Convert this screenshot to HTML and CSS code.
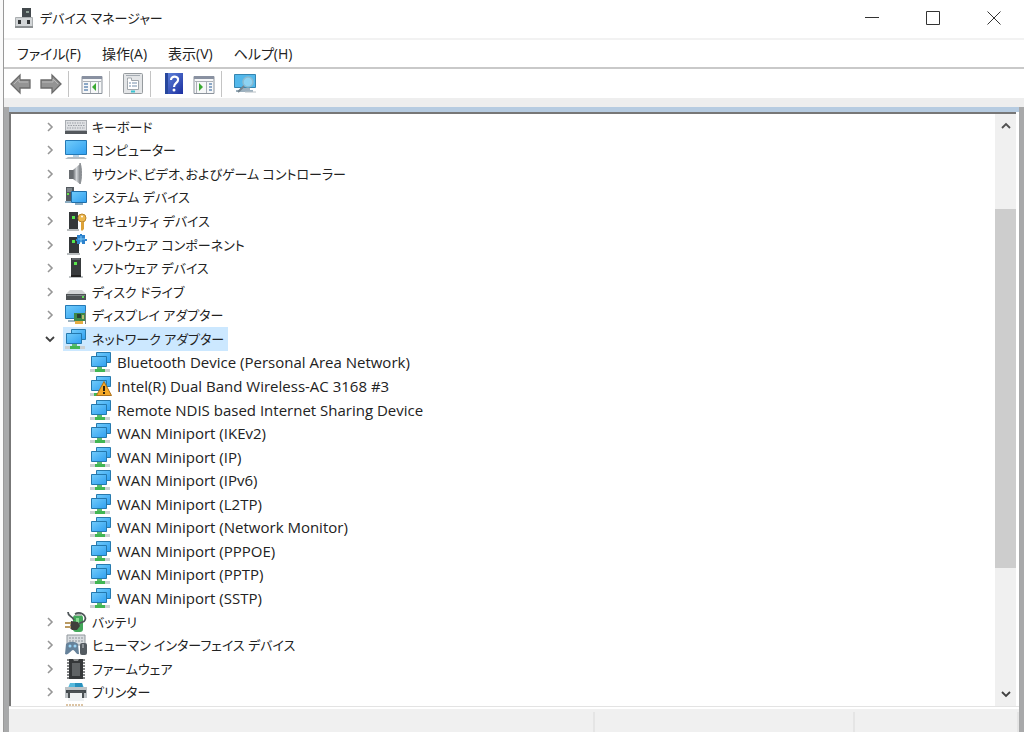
FILE: index.html
```html
<!DOCTYPE html>
<html lang="ja">
<head>
<meta charset="utf-8">
<title>デバイス マネージャー</title>
<link rel="stylesheet" href="styles.css">
</head>
<body>
<svg class="defs" aria-hidden="true">
  <defs>
    <linearGradient id="scr" x1="0" y1="0" x2="1" y2="1"><stop offset="0" stop-color="#72ccfb"/><stop offset="1" stop-color="#2f9ff0"/></linearGradient>
    <linearGradient id="metal" x1="0" y1="0" x2="0" y2="1"><stop offset="0" stop-color="#dfe2e4"/><stop offset="1" stop-color="#9a9ea1"/></linearGradient>
    <linearGradient id="cone" x1="0" y1="0" x2="1" y2="0"><stop offset="0" stop-color="#666a6e"/><stop offset=".5" stop-color="#d2d5d8"/><stop offset="1" stop-color="#85898d"/></linearGradient>
    <linearGradient id="book" x1="0" y1="0" x2="1" y2="1"><stop offset="0" stop-color="#6286dc"/><stop offset="1" stop-color="#1b2fa0"/></linearGradient>
  </defs>
  <symbol id="chev" viewBox="0 0 10 10"><path d="M3 1l4 4-4 4" fill="none" stroke="#979797" stroke-width="1.6"/></symbol>
  <symbol id="chevdown" viewBox="0 0 10 10"><path d="M1 3l4 4 4-4" fill="none" stroke="#404040" stroke-width="1.8"/></symbol>
  <symbol id="chevup" viewBox="0 0 10 10"><path d="M1 7l4-4 4 4" fill="none" stroke="#505050" stroke-width="1.8"/></symbol>
  <symbol id="keyboard" viewBox="0 0 22 22"><path d="M0 4h22v14H0z" fill="#a9adb2"/><path d="M1 5h20v9H1z" fill="#dfe1e4"/><path d="M2 7h18M3 9.500h17M2 12h18" stroke="#9a9fa5" stroke-width="1.200" stroke-dasharray="1.500 1"/><path d="M0 15h22v3H0z" fill="#54585d"/></symbol>
  <symbol id="monitor" viewBox="0 0 22 22"><path d="M.5 1.500h21v14H.5z" fill="url(#scr)" stroke="#2479b5"/><path d="M8 16h6v2H8z" fill="#b9d2e4"/><path d="M3 18h16l3 2H0z" fill="#b5bec5"/></symbol>
  <symbol id="speaker" viewBox="0 0 22 22"><path d="M4 7h4v9H4z" fill="#686c70"/><path d="M8 7l7-6v20l-7-5z" fill="url(#cone)"/><path d="M15 0c2 4 2 17 0 21z" fill="#8c9094" stroke="#8c9094"/></symbol>
  <symbol id="system" viewBox="0 0 22 22"><path d="M1 1h8v15H1z" fill="#53595e"/><path d="M2 3h5M2 5h5" stroke="#aeb6bb"/><path d="M2 7h2v2H2z" fill="#65e04b"/><path d="M6.500 5.500h15v11h-15z" fill="url(#scr)" stroke="#206ea8"/><path d="M0 15h6v2H0zM10 17h8v2h-8z" fill="#8babc0"/></symbol>
  <symbol id="tower" viewBox="0 0 22 22"><path d="M6 1h10v18H6z" fill="#383b3d"/><path d="M7 1h8v2H7z" fill="#62676a"/><path d="M9 5h3v3H9z" fill="#5ae64c"/><path d="M4 19h14v2H4z" fill="#bfc3c5"/><path d="M6 18h10v2H6z" fill="#222"/></symbol>
  <symbol id="towerkey" viewBox="0 0 22 22"><path d="M4 2h9v17H4z" fill="#343739"/><path d="M2 19h12v2H2z" fill="#babebf"/><path d="M7 6h3v3H7z" fill="#55e64b"/><circle cx="17" cy="8" r="4" fill="#edb84d" stroke="#bc852c"/><circle cx="17" cy="6.500" r="1" fill="#fff"/><path d="M16 12h3v7l-2 2-1-1z" fill="#dca238"/></symbol>
  <symbol id="component" viewBox="0 0 22 22"><path d="M4 3h10v16H4z" fill="#343739"/><path d="M2 19h13v2H2z" fill="#b8bcbe"/><path d="M7 6h3v3H7z" fill="#55e64b"/><path d="M12 1h3V0h2v1h3v4h2v2h-2v3h-3V8h-2v2h-3V7h-1V5h1z" fill="#2d82cd"/><path d="M13 5h7M16 2v7" stroke="#7ec9f4"/></symbol>
  <symbol id="disk" viewBox="0 0 22 22"><path d="M5 9h12l4 4H1z" fill="#d3d5d6"/><path d="M1 13h20v6H1z" fill="#4d5153"/><path d="M2 14h18v1H2z" fill="#7c8184"/><path d="M17 15h2v2h-2z" fill="#5edd58"/></symbol>
  <symbol id="display" viewBox="0 0 22 22"><path d="M.5 1.500h20v13H.5z" fill="url(#scr)" stroke="#2479b5"/><path d="M3 16h7v2H3z" fill="#9fb4c1"/><path d="M9 9h11v8H9z" fill="#3e8849"/><path d="M12 10h4v4h-4z" fill="#273f34"/><path d="M17 11h2v4h-2z" fill="#b8bc70"/><path d="M10 17h8v3h-8z" fill="#e5ad43"/><path d="M20 7h1v13h-1z" fill="#747a7c"/></symbol>
  <symbol id="network" viewBox="0 0 22 22"><path d="M6.500 1.500h14v10h-14z" fill="url(#scr)" stroke="#287aad"/><path d="M1.500 5.500h15v10h-15z" fill="url(#scr)" stroke="#2478ad"/><path d="M7 16h5v2H7z" fill="#5fbb70"/><path d="M0 18h20v3H0z" fill="#cbd0d2"/><path d="M5 18h10v3H5z" fill="#42b653"/></symbol>
  <symbol id="warning" viewBox="0 0 22 22"><path d="M6.500 1.500h14v10h-14z" fill="url(#scr)" stroke="#287aad"/><path d="M1.500 5.500h15v10h-15z" fill="url(#scr)" stroke="#2478ad"/><path d="M0 18h8v3H0z" fill="#cbd0d2"/><path d="M4 18h3v3H4z" fill="#42b653"/><path d="M14 6.500L21.500 20.500H6.500z" fill="#f5a928" stroke="#ad711c"/><path d="M13 11h2v5h-2zM13 17h2v2h-2z" fill="#30240e"/></symbol>
  <symbol id="battery" viewBox="0 0 22 22"><rect x="8" y="4" width="10" height="17" rx="3" fill="#43a85a"/><path d="M10 2h6v3h-6z" fill="#a8b4ab"/><path d="M11 7h3v9h-3z" fill="#88dc91"/><path d="M3 1c0 5 4 3 6 8M10 3c5-3 12 1 10 6-1 3-4 1-6 4" fill="none" stroke="#4e5558" stroke-width="1.800"/><path d="M6 10l7 1 2 4-3 4H7l-2-2z" fill="#403f3c"/><path d="M0 12h6M0 16h6" stroke="#b99a62" stroke-width="2"/></symbol>
  <symbol id="hid" viewBox="0 0 22 22"><path d="M2 1h18v10H2z" fill="#d9dde0" stroke="#92989d"/><path d="M4 4h14M4 7h14" stroke="#8c939a" stroke-dasharray="2 1"/><path d="M1 10c3-3 9-3 12 0l1 10c-3 1-4-4-6-4s-5 6-8 4z" fill="#66829a"/><circle cx="5" cy="12" r="1.500" fill="#9ad4f5"/><circle cx="10" cy="12" r="1.500" fill="#9ad4f5"/><rect x="15" y="9" width="7" height="12" rx="2" fill="#545b61"/><path d="M18 10v4" stroke="#c6ccd0"/></symbol>
  <symbol id="firmware" viewBox="0 0 22 22"><path d="M2 2h18M2 5h18M2 8h18M2 11h18M2 14h18M2 17h18M2 20h18" stroke="#5b5d5f" stroke-width="1.500"/><path d="M4 1h4l1 2h4l1-2h4v20H4z" fill="#353739"/><path d="M7 5h8v13H7z" fill="#606365"/></symbol>
  <symbol id="printer" viewBox="0 0 22 22"><path d="M5 2h12l2 5H3z" fill="#56b9dc"/><path d="M10 2h7l1 5h-8z" fill="#2990bd"/><path d="M0 6h22v11H0z" fill="#bec3c6"/><path d="M1 9h20v3H1z" fill="#43494d"/><path d="M4 12h14l1 8H3z" fill="#eef1f2"/><path d="M4 17v-6h14v6" fill="none" stroke="#4c5255" stroke-width="2"/></symbol>
  <symbol id="app" viewBox="0 0 22 22"><path d="M9 1h9v11H9z" fill="#43494d"/><path d="M13 4h3v2h-3z" fill="#91a299"/><path d="M2.500 10.500h17v10h-17z" fill="#d2d5d7" stroke="#aaaeb0"/><path d="M5 13h3v4H5zM14 13h3v4h-3z" fill="#303335"/><path d="M2 19h18v2H2z" fill="#8d9193"/></symbol>
  <symbol id="back" viewBox="0 0 22 22"><path d="M1 11L10 2v5h10v8H10v5z" fill="#949494" stroke="#6b6b6b" stroke-width="1.300"/><path d="M4 11l5-5v3h9" fill="none" stroke="#b9b9b9"/></symbol>
  <symbol id="forward" viewBox="0 0 22 22"><path d="M21 11l-9-9v5H1v8h11v5z" fill="#949494" stroke="#6b6b6b" stroke-width="1.300"/><path d="M2 9h11V6l5 5" fill="none" stroke="#b9b9b9"/></symbol>
  <symbol id="panel" viewBox="0 0 22 22"><path d="M1 3.500h20v17H1z" fill="#f6f7f8" stroke="#8d949d"/><path d="M1 3h20v3H1z" fill="#8991a1"/><path d="M2 8.500h18M9.500 9v11M17.500 9v11" stroke="#abb0b6"/><path d="M3 11h4M3 14h4M3 17h4" stroke="#6a8eb7" stroke-width="1.500"/><path d="M15 10v8l-4-4z" fill="#3aaa31"/></symbol>
  <symbol id="action" viewBox="0 0 22 22"><path d="M1 3.500h20v17H1z" fill="#f6f7f8" stroke="#8d949d"/><path d="M1 3h20v3H1z" fill="#8991a1"/><path d="M2 8.500h18M3.500 9v11M13.500 9v11" stroke="#abb0b6"/><path d="M16 11h3M16 14h3M16 17h3" stroke="#6a8eb7" stroke-width="1.500"/><path d="M6 10v8l4-4z" fill="#3aaa31"/></symbol>
  <symbol id="props" viewBox="0 0 22 22"><rect x="1.500" y=".5" width="19" height="20" rx="1" fill="#e3e5e7" stroke="#969b9f"/><path d="M4 2.500h14" stroke="#a4abb2"/><path d="M5.500 7.500V5h4v2.500h7v9h-11z" fill="#fff" stroke="#a1a7ac"/><path d="M7 10h2M10 10h5M7 13h2M10 13h5" stroke="#748eaa"/><path d="M9 18.500h4" stroke="#39c2d0" stroke-width="2"/></symbol>
  <symbol id="help" viewBox="0 0 22 22"><path d="M2 0h18v21H2z" fill="url(#book)"/><path d="M2 0h3v21H2z" fill="#27479d"/><path d="M8 7c0-5 8-4 7 0 0 3-4 3-4 7" fill="none" stroke="#fff" stroke-width="2.200"/><circle cx="11" cy="17" r="1.500" fill="#fff"/></symbol>
  <symbol id="scan" viewBox="0 0 22 22"><path d="M.5 1.500h21v13H.5z" fill="#53b8eb" stroke="#3585b0"/><path d="M6 15h10v2h3v2H2v-2h4z" fill="#9db1bf"/><circle cx="14" cy="9" r="5" fill="#9cdaf5" fill-opacity=".8" stroke="#8bbbd1" stroke-width="1.500"/><path d="M10 13l-6 6" stroke="#73848f" stroke-width="2"/><path d="M11 19h11" stroke="#b8c0c5"/></symbol>
</svg>
<div class="desktop">
  <main class="window">
    <header class="titlebar">
      <svg class="icon"><use href="#app"/></svg>
      <h1 class="title">デバイス マネージャー</h1>
      <div class="controls">
        <button class="control" aria-label="最小化"><svg class="glyph" viewBox="0 0 14 14"><path d="M0 6.500h14"/></svg></button>
        <button class="control" aria-label="最大化"><svg class="glyph" viewBox="0 0 14 14"><path d="M.5.5h13v13H.5z"/></svg></button>
        <button class="control" aria-label="閉じる"><svg class="glyph" viewBox="0 0 14 14"><path d="M.5.5l13 13M13.500.5l-13 13"/></svg></button>
      </div>
    </header>
    <nav class="menubar">
      <button class="menu">ファイル(F)</button><button class="menu">操作(A)</button><button class="menu">表示(V)</button><button class="menu">ヘルプ(H)</button>
    </nav>
    <div class="toolbar">
      <div class="group nav"><button class="tool" aria-label="戻る"><svg class="icon"><use href="#back"/></svg></button><button class="tool" aria-label="進む"><svg class="icon"><use href="#forward"/></svg></button></div>
      <div class="group"><button class="tool" aria-label="コンソール ツリー"><svg class="icon"><use href="#panel"/></svg></button></div>
      <div class="group"><button class="tool" aria-label="プロパティ"><svg class="icon"><use href="#props"/></svg></button></div>
      <div class="group"><button class="tool" aria-label="ヘルプ"><svg class="icon"><use href="#help"/></svg></button><button class="tool" aria-label="操作ウィンドウ"><svg class="icon"><use href="#action"/></svg></button></div>
      <div class="group"><button class="tool" aria-label="ハードウェア変更のスキャン"><svg class="icon"><use href="#scan"/></svg></button></div>
    </div>
    <div class="band"></div>
    <div class="frame">
      <section class="pane">
        <ul class="tree">
          <li class="row"><button class="toggle" aria-label="展開"><svg><use href="#chev"/></svg></button><span class="item"><svg class="icon"><use href="#keyboard"/></svg>キーボード</span></li>
          <li class="row"><button class="toggle" aria-label="展開"><svg><use href="#chev"/></svg></button><span class="item"><svg class="icon"><use href="#monitor"/></svg>コンピューター</span></li>
          <li class="row"><button class="toggle" aria-label="展開"><svg><use href="#chev"/></svg></button><span class="item"><svg class="icon"><use href="#speaker"/></svg>サウンド、ビデオ、およびゲーム コントローラー</span></li>
          <li class="row"><button class="toggle" aria-label="展開"><svg><use href="#chev"/></svg></button><span class="item"><svg class="icon"><use href="#system"/></svg>システム デバイス</span></li>
          <li class="row"><button class="toggle" aria-label="展開"><svg><use href="#chev"/></svg></button><span class="item"><svg class="icon"><use href="#towerkey"/></svg>セキュリティ デバイス</span></li>
          <li class="row"><button class="toggle" aria-label="展開"><svg><use href="#chev"/></svg></button><span class="item"><svg class="icon"><use href="#component"/></svg>ソフトウェア コンポーネント</span></li>
          <li class="row"><button class="toggle" aria-label="展開"><svg><use href="#chev"/></svg></button><span class="item"><svg class="icon"><use href="#tower"/></svg>ソフトウェア デバイス</span></li>
          <li class="row"><button class="toggle" aria-label="展開"><svg><use href="#chev"/></svg></button><span class="item"><svg class="icon"><use href="#disk"/></svg>ディスク ドライブ</span></li>
          <li class="row"><button class="toggle" aria-label="展開"><svg><use href="#chev"/></svg></button><span class="item"><svg class="icon"><use href="#display"/></svg>ディスプレイ アダプター</span></li>
          <li class="row"><button class="toggle" aria-label="折りたたむ"><svg><use href="#chevdown"/></svg></button><span class="item selected"><svg class="icon"><use href="#network"/></svg>ネットワーク アダプター</span></li>
          <li class="row child"><span class="item"><svg class="icon"><use href="#network"/></svg>Bluetooth Device (Personal Area Network)</span></li>
          <li class="row child"><span class="item"><svg class="icon"><use href="#warning"/></svg>Intel(R) Dual Band Wireless-AC 3168 #3</span></li>
          <li class="row child"><span class="item"><svg class="icon"><use href="#network"/></svg>Remote NDIS based Internet Sharing Device</span></li>
          <li class="row child"><span class="item"><svg class="icon"><use href="#network"/></svg>WAN Miniport (IKEv2)</span></li>
          <li class="row child"><span class="item"><svg class="icon"><use href="#network"/></svg>WAN Miniport (IP)</span></li>
          <li class="row child"><span class="item"><svg class="icon"><use href="#network"/></svg>WAN Miniport (IPv6)</span></li>
          <li class="row child"><span class="item"><svg class="icon"><use href="#network"/></svg>WAN Miniport (L2TP)</span></li>
          <li class="row child"><span class="item"><svg class="icon"><use href="#network"/></svg>WAN Miniport (Network Monitor)</span></li>
          <li class="row child"><span class="item"><svg class="icon"><use href="#network"/></svg>WAN Miniport (PPPOE)</span></li>
          <li class="row child"><span class="item"><svg class="icon"><use href="#network"/></svg>WAN Miniport (PPTP)</span></li>
          <li class="row child"><span class="item"><svg class="icon"><use href="#network"/></svg>WAN Miniport (SSTP)</span></li>
          <li class="row"><button class="toggle" aria-label="展開"><svg><use href="#chev"/></svg></button><span class="item"><svg class="icon"><use href="#battery"/></svg>バッテリ</span></li>
          <li class="row"><button class="toggle" aria-label="展開"><svg><use href="#chev"/></svg></button><span class="item"><svg class="icon"><use href="#hid"/></svg>ヒューマン インターフェイス デバイス</span></li>
          <li class="row"><button class="toggle" aria-label="展開"><svg><use href="#chev"/></svg></button><span class="item"><svg class="icon"><use href="#firmware"/></svg>ファームウェア</span></li>
          <li class="row"><button class="toggle" aria-label="展開"><svg><use href="#chev"/></svg></button><span class="item"><svg class="icon"><use href="#printer"/></svg>プリンター</span></li>
          <li class="next"><svg class="peek" viewBox="0 0 20 2"><path d="M1 1h18" stroke="#dcc4a4" stroke-width="2" stroke-dasharray="2 1"/></svg></li>
        </ul>
        <div class="scrollbar">
          <button class="scroll" aria-label="上へ"><svg><use href="#chevup"/></svg></button>
          <div class="track"><div class="before"></div><div class="thumb"></div><div class="after"></div></div>
          <button class="scroll" aria-label="下へ"><svg><use href="#chevdown"/></svg></button>
        </div>
      </section>
      <footer class="status"><span class="cell message"></span><span class="cell detail"></span><span class="cell rest"></span></footer>
    </div>
  </main>
</div>
</body>
</html>
```
FILE: styles.css
```css
* { box-sizing: border-box; }
body { margin: 0; color: #222; font: 13px/20px "Open Sans", "Noto Sans CJK JP", sans-serif; font-feature-settings: "palt"; }
button { padding: 0; border: 0; background: none; color: inherit; font: inherit; font-feature-settings: inherit; }
svg { display: block; }
.defs { position: absolute; width: 0; height: 0; }
.desktop { display: flex; height: 100vh; padding-left: 3px; background: #fafafa; overflow: hidden; }
.window { display: flex; flex: 1; flex-direction: column; min-width: 0; border-left: 1px solid #999; background: #fff; }
.icon { flex: none; width: 22px; height: 22px; }
.titlebar { display: flex; flex: none; align-items: center; gap: 5px; height: 38px; padding: 0 0 2px 9px; }
.title { flex: 1; margin: 0; font-size: 13px; font-weight: 400; }
.controls { display: flex; }
.control { display: grid; place-items: center; width: 61px; height: 36px; }
.glyph { width: 14px; height: 14px; fill: none; stroke: #333; overflow: visible; }
.menubar { display: flex; flex: none; align-items: center; gap: 21px; height: 31px; padding-left: 13px; border-top: 2px solid #f2f2f2; border-bottom: 2px solid #c9c9c9; font-size: 14px; }
.toolbar { display: flex; flex: none; align-items: center; height: 29px; }
.group { display: flex; align-items: center; gap: 8px; height: 26px; padding: 1px 6px 0 12px; border-left: 1px solid #c4c4c4; }
.nav { padding-left: 6px; border: 0; }
.band { flex: none; height: 9px; background: #eee; }
.frame { display: flex; flex: 1; flex-direction: column; min-height: 0; border: solid #a8a9aa; border-width: 0 5px; background: #f0f0f0; }
.pane { display: flex; flex: 1; min-height: 0; padding-right: 3px; border-top: 5px solid #b7cce1; border-bottom: 1px solid #e3e3e3; background: #fff; }
.tree { display: flex; flex: 1; flex-direction: column; min-width: 0; margin: 0; padding: 1px 0 0 34px; border: solid #777; border-width: 2px 0 0 2px; list-style: none; background: #fff; }
.row { display: flex; flex: 1; align-items: center; gap: 8px; min-height: 0; }
.toggle svg, .scroll svg { width: 10px; height: 10px; }
.item { display: flex; align-items: center; gap: 5px; height: 100%; padding: 0 4px 0 2px; white-space: nowrap; }
.child { padding-left: 43px; font-size: 15px; }
.selected { background: #cce8ff; }
.next { flex: none; height: 2px; padding-left: 20px; }
.peek { width: 20px; height: 2px; }
.scrollbar { display: flex; flex-direction: column; width: 21px; border-top: 2px solid #777; background: #f0f0f0; }
.scroll { display: grid; place-items: center; height: 24px; }
.track { display: flex; flex: 1; flex-direction: column; }
.before { flex: 13; }
.thumb { flex: 66; background: #cdcdcd; }
.after { flex: 21; }
.status { display: flex; flex: none; height: 25px; padding-top: 3px; border-top: 2px solid #fff; }
.cell { border-right: 2px solid #e5e5e5; }
.message { flex: 584; }
.detail { flex: 258; }
.rest { flex: 162; }
```
